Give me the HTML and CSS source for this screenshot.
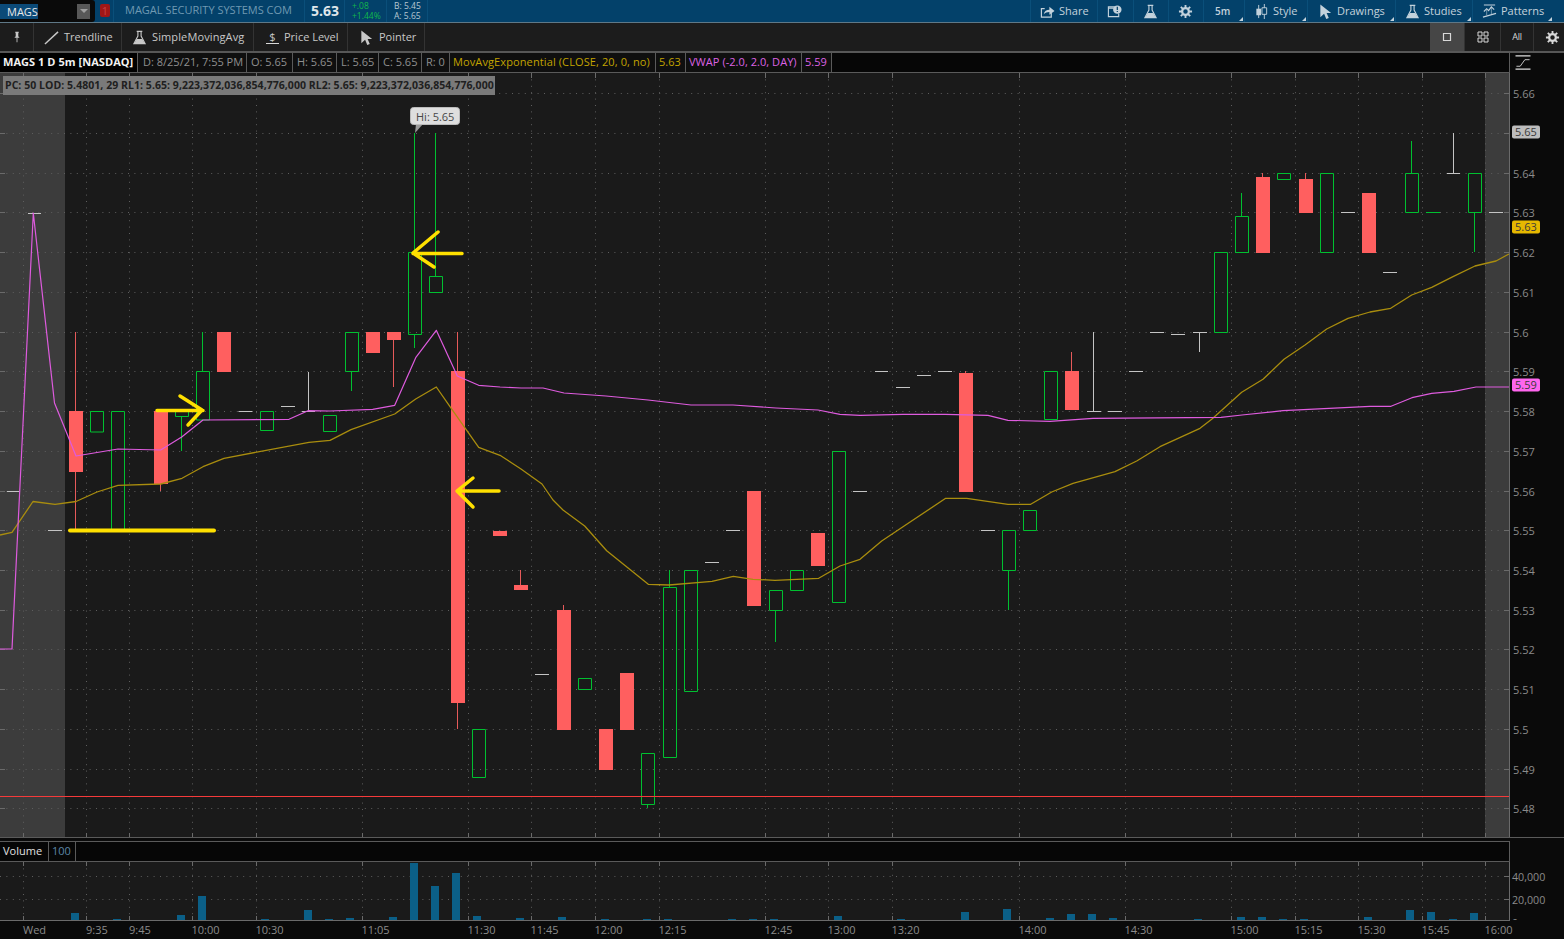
FILE: index.html
```html
<!DOCTYPE html>
<html lang="en">
<head>
<meta charset="utf-8">
<title>MAGS chart</title>
<link rel="stylesheet" href="styles.css">
</head>
<body>
<svg class="defs" width="0" height="0">
  <symbol id="flask" viewBox="0 0 16 16"><path d="M5 1.500h6M6.300 1.500v5L2 14.500h12L9.700 6.500v-5" fill="none" stroke="currentColor" stroke-width="1.200"/><path d="M5 9.500h6l3 5.500H2z" fill="currentColor"/></symbol>
  <symbol id="gear" viewBox="0 0 16 16"><circle cx="8" cy="8" r="3.600" fill="none" stroke="currentColor" stroke-width="2.400"/><path d="M8 1v3M8 12v3M1 8h3M12 8h3M3 3l2.200 2.200M10.800 10.800L13 13M13 3l-2.200 2.200M5.200 10.800L3 13" stroke="currentColor" stroke-width="2"/></symbol>
  <symbol id="cursor" viewBox="0 0 16 16"><path d="M2.500 .5L14 9.500H9.200L11.500 14.800L8.800 16L6.500 10.500L2.500 14z" fill="currentColor"/></symbol>
</svg>

<header class="topbar">
  <div class="symbol">
    <span class="symbol-text">MAGS</span>
    <span class="symbol-btn"></span>
  </div>
  <span class="badge">1</span>
  <span class="company">MAGAL SECURITY SYSTEMS COM</span>
  <span class="last">5.63</span>
  <span class="change"><span>+.08</span><span>+1.44%</span></span>
  <span class="bidask"><span>B: 5.45</span><span>A: 5.65</span></span>
  <nav class="top-actions">
    <span class="act w-share"><svg class="ic" viewBox="0 0 16 16"><path d="M12 9v5H1.500V5H5" fill="none" stroke="currentColor" stroke-width="1.300"/><path d="M4 11c.5-3.500 3-5 6-5V3l5.500 4.500L10 11.500V8.500c-2.500 0-4.500.8-6 2.500z" fill="currentColor"/></svg>Share</span>
    <span class="act w-note"><svg class="ic" viewBox="0 0 16 16"><path d="M1.500 3h9v1.500h-9zM1.500 4.500v9h11V10" fill="none" stroke="currentColor" stroke-width="1.200"/><circle cx="11" cy="6" r="4.500" fill="currentColor"/><path d="M11 3v3.500M11 7.500v1" stroke="#03416a" stroke-width="1.300"/></svg></span>
    <span class="act w-flask"><svg class="ic"><use href="#flask"/></svg></span>
    <span class="act w-gear"><svg class="ic"><use href="#gear"/></svg></span>
    <span class="act w-tf corner"><b class="tf">5m</b></span>
    <span class="act w-style corner"><svg class="ic" viewBox="0 0 16 16"><path d="M5 1v14M11 0v16" stroke="currentColor"/><path d="M2.500 5h5v7h-5z" fill="currentColor"/><path d="M8.500 4h5v7h-5z" fill="#03416a" stroke="currentColor"/></svg>Style</span>
    <span class="act w-draw corner"><svg class="ic"><use href="#cursor"/></svg>Drawings</span>
    <span class="act w-studies corner"><svg class="ic"><use href="#flask"/></svg>Studies</span>
    <span class="act w-patterns corner"><svg class="ic" viewBox="0 0 16 16"><path d="M2 1h12M1 14l14-4M2 8l3-3 2 2 3-4 3 3" fill="none" stroke="currentColor" stroke-width="1.200"/><path d="M5 12V5M10 11V3" stroke="currentColor" stroke-width=".6"/></svg>Patterns</span>
  </nav>
</header>

<section class="toolbar">
  <span class="tool t-pin"><svg class="ic-s" viewBox="0 0 12 14"><path d="M4 1h4v1l-.5.500V6L9 8H3l1.500-2V2.500L4 2zM5.500 8h1v5h-1z" fill="currentColor"/></svg></span>
  <span class="tool t-trend"><svg class="ic" viewBox="0 0 16 16"><path d="M1 15L15 2" stroke="currentColor" stroke-width="1.500"/></svg>Trendline</span>
  <span class="tool t-sma"><svg class="ic"><use href="#flask"/></svg><span class="wide">SimpleMovingAvg</span></span>
  <span class="tool t-price"><span class="dollar">$</span>Price Level</span>
  <span class="tool t-pointer"><svg class="ic"><use href="#cursor"/></svg>Pointer</span>
  <div class="grid-btns">
    <span class="gbtn on"><svg class="ic-s" viewBox="0 0 12 12"><path d="M2.500 2.500h7v7h-7z" fill="none" stroke="currentColor" stroke-width="1.200"/></svg></span>
    <span class="gbtn g2"><svg class="ic-s" viewBox="0 0 12 12"><path d="M1 1h4v4H1zM7 1h4v4H7zM1 7h4v4H1zM7 7h4v4H7z" fill="none" stroke="currentColor"/></svg></span>
    <span class="gbtn g3"><span class="all">All</span></span>
    <span class="gbtn g4"><svg class="ic"><use href="#gear"/></svg></span>
  </div>
</section>

<section class="legend-row">
  <div class="legend">
    <span class="cell title">MAGS 1 D 5m [NASDAQ]</span>
    <span class="cell c-d">D: 8/25/21, 7:55 PM</span>
    <span class="cell c-o">O: 5.65</span>
    <span class="cell c-h">H: 5.65</span>
    <span class="cell c-l">L: 5.65</span>
    <span class="cell c-c">C: 5.65</span>
    <span class="cell c-r">R: 0</span>
    <span class="cell gold c-ema">MovAvgExponential (CLOSE, 20, 0, no)</span>
    <span class="cell gold c-v1">5.63</span>
    <span class="cell pink c-vw">VWAP (-2.0, 2.0, DAY)</span>
    <span class="cell pink c-v2">5.59</span>
  </div>
  <div class="legend-side">
    <svg class="autoscale" viewBox="0 0 16 16"><path d="M0 1h16M0 15h16" stroke="#ddd" stroke-width="1.300"/><path d="M1 12h4l5-7h5" fill="none" stroke="#ccc"/></svg>
  </div>
</section>

<section class="price-pane">
  <div class="study-label">PC: 50 LOD: 5.4801, 29 RL1: 5.65: 9,223,372,036,854,776,000 RL2: 5.65: 9,223,372,036,854,776,000</div>
  <svg class="chart" width="1564" height="764" viewBox="0 73 1564 764">
    <rect class="plot" x="0" y="73" width="1509" height="764"/>
    <rect class="shade" x="0" y="73" width="65" height="764"/>
    <rect class="shade" x="1485" y="73" width="24" height="764"/>

    <path class="grid" d="M0 93.500H1509M0 133.500H1509M0 173.500H1509M0 212.500H1509M0 252.500H1509M0 292.500H1509M0 332.500H1509M0 371.500H1509M0 411.500H1509M0 451.500H1509M0 491.500H1509M0 530.500H1509M0 570.500H1509M0 610.500H1509M0 649.500H1509M0 689.500H1509M0 729.500H1509M0 769.500H1509M0 808.500H1509"/>
    <path class="grid" d="M23.500 73V837M86.500 73V837M129.500 73V837M192.500 73V837M256.500 73V837M362.500 73V837M468.500 73V837M531.500 73V837M595.500 73V837M659.500 73V837M765.500 73V837M828.500 73V837M892.500 73V837M1019.500 73V837M1125.500 73V837M1231.500 73V837M1295.500 73V837M1358.500 73V837M1422.500 73V837M1485.500 73V837"/>
    <path class="tick" d="M23.500 73v5M86.500 73v5M129.500 73v5M192.500 73v5M256.500 73v5M362.500 73v5M468.500 73v5M531.500 73v5M595.500 73v5M659.500 73v5M765.500 73v5M828.500 73v5M892.500 73v5M1019.500 73v5M1125.500 73v5M1231.500 73v5M1295.500 73v5M1358.500 73v5M1422.500 73v5M1485.500 73v5M23.500 833v4M86.500 833v4M129.500 833v4M192.500 833v4M256.500 833v4M362.500 833v4M468.500 833v4M531.500 833v4M595.500 833v4M659.500 833v4M765.500 833v4M828.500 833v4M892.500 833v4M1019.500 833v4M1125.500 833v4M1231.500 833v4M1295.500 833v4M1358.500 833v4M1422.500 833v4M1485.500 833v4"/>
    <path class="tick" d="M1504 93.500h5M1504 133.500h5M1504 173.500h5M1504 212.500h5M1504 252.500h5M1504 292.500h5M1504 332.500h5M1504 371.500h5M1504 411.500h5M1504 451.500h5M1504 491.500h5M1504 530.500h5M1504 570.500h5M1504 610.500h5M1504 649.500h5M1504 689.500h5M1504 729.500h5M1504 769.500h5M1504 808.500h5M0 93.500h5M0 133.500h5M0 173.500h5M0 212.500h5M0 252.500h5M0 292.500h5M0 332.500h5M0 371.500h5M0 411.500h5M0 451.500h5M0 491.500h5M0 530.500h5M0 570.500h5M0 610.500h5M0 649.500h5M0 689.500h5M0 729.500h5M0 769.500h5M0 808.500h5"/>

    <path class="dash" d="M7 491.500h12M28 213.500h13M48 530.500h14M238.500 411.500h14M281 406.500h14M302 411.500h13M535 674.500h14M705 562.500h14M726 530.500h14M853 491.500h14M875 371.500h13M896 387.500h14M917 375.500h14M938 371.500h14M981 530.500h14M1087 411.500h14M1108 411.500h14M1129 371.500h14M1150 332.500h14M1171 334.500h14M1193 332.500h14M1341 212.500h14M1383 272.500h14M1447 173.500h13M1489 212.500h14"/>
    <path class="dash" d="M308.500 372V411M1093.500 332V411M1199.500 332V352M1453.500 133V173"/>
    <path class="wick-dn" d="M75.500 332V530M160.500 484V491M393.500 340V387M457.500 332V729M520.500 570V585M563.500 605V610M1071.500 352V371M1262.500 173V177M1305.500 173V179M965.500 371V373"/>
    <path class="bar-dn" d="M69 411h14v61H69zM154 411h14v73h-14zM217 332h14v40h-14zM366 332h14v21h-14zM387 332h14v8h-14zM451 371h14v332h-14zM493 531h14v5h-14zM514 585h14v5h-14zM557 610h14v120h-14zM599 729h14v41h-14zM620 673h14v57h-14zM747 491h14v115h-14zM811 533h14v33h-14zM959 373h14v119h-14zM1065 371h14v39h-14zM1256 177h14v76h-14zM1299 179h14v34h-14zM1362 193h14v60h-14z"/>
    <path class="wick-up" d="M181.500 416V451M202.500 332V371M351.500 371V391M414.500 133V252M414.500 334V348M435.500 133V276M647.500 804V808M669.500 570V587M775.500 610V642M1008.500 570V610M1241.500 193V216M1411.500 141V173M1474.500 212V252M1426 212.500h14"/>
    <path class="bar-up" d="M90.500 411.500h13v20.500h-13zM111.500 411.500h13V530h-13zM175.500 411.500h13v5h-13zM196.500 371.500h13V420h-13zM260.500 411.500h13v19h-13zM323.500 415.500h13v16h-13zM345.500 332.500h13v39h-13zM408.500 252.500h13v82h-13zM429.500 276.500h13v16h-13zM472.500 729.500h13v48h-13zM578.500 678.500h13v11h-13zM641.500 753.500h13v51h-13zM663.500 587.500h13v170h-13zM684.500 570.500h13v121h-13zM769.500 590.500h13v20h-13zM790.500 570.500h13v20h-13zM832.500 451.500h13v151h-13zM1002.500 530.500h13v40h-13zM1023.500 510.500h13v20h-13zM1044.500 371.500h13v48h-13zM1214.500 252.500h13v80h-13zM1235.500 216.500h13v36h-13zM1277.500 173.500h13v6h-13zM1320.500 173.500h13v79h-13zM1405.500 173.500h13v39h-13zM1468.500 173.500h13v39h-13z"/>

    <path class="redline" d="M0 796.500H1509"/>
    <polyline class="ema" points="0,535 12,532.300 33,501.500 55,504.300 76,501.500 97,492 118,485.300 160.700,484 182,478.300 203,466.700 224,458.300 309,442.300 330,440.300 351,429.700 394.700,414 415.700,399 436.300,387 450,406.700 478.700,447.300 500,455.300 521,469 542,484 553,500 563,510 584.700,526 606.700,550.700 648.300,584.300 669,585 712,581.300 733.300,576.300 753,579.300 775,580.300 818.700,578.300 840,566 860,559.300 881.700,541 903,526.700 945.700,498.300 966.700,498.300 1008,504.300 1030.700,504.300 1051.700,492 1073,483.300 1115,471.700 1136.700,461 1160,446.700 1200,428.300 1212,419 1241.700,392.300 1263,379.300 1284,359.300 1305,345 1326.700,329 1348,318.300 1370,312 1390.700,308.300 1411.700,295 1431.700,287.300 1453,276.700 1475,266 1496,261 1509,254"/>
    <polyline class="vwap" points="0,649 12,649 33.300,213 54.500,403 76,456 118,449 160.700,450 181.700,437 203,420 289,419.300 308,410.700 330,411 372.700,409.300 394.700,405.300 415.700,357.700 436.300,330.300 457.300,376 478.700,385.300 500,387 521,388 543,388 564,393 606,396 648,400 691,405 733,405 776,408 818,410 840,414.300 860,415.300 903,414.300 945.300,414.300 988,415.300 1008,420.300 1050,421.300 1093,418.300 1221,417.300 1242,415 1283,410.700 1370,406.300 1391,406.300 1412,397.700 1431.700,393.300 1454,391.300 1476,387 1509,387"/>

    <path class="marker thick" d="M70 530.500H214"/>
    <path class="marker" d="M157 410.500H203M180 396L202 410L188 425"/>
    <path class="marker" d="M462 253.500H413M438 232L413 253L434 267"/>
    <path class="marker" d="M499 491H457M473 478L457 491L473 507"/>

    <path class="tip-tail" d="M416 124L415 133L423 124z"/>
    <rect class="tip" x="410.500" y="107.500" width="49" height="17" rx="3"/>
    <text class="tip-text" x="416" y="120.500">Hi: 5.65</text>

    <rect class="tag tag-hi" x="1512" y="125.500" width="28" height="13" rx="2"/>
    <rect class="tag tag-last" x="1512" y="220.500" width="28" height="13" rx="2"/>
    <rect class="tag tag-vwap" x="1512" y="378.500" width="28" height="13" rx="2"/>
    <path class="edge" d="M1509.500 73V837"/>
    <g class="axis">
      <text x="1513" y="97.500">5.66</text>
      <text class="tag-text" x="1515" y="136">5.65</text>
      <text x="1513" y="178">5.64</text>
      <text x="1513" y="217">5.63</text>
      <text class="tag-text" x="1515" y="231">5.63</text>
      <text x="1513" y="257">5.62</text>
      <text x="1513" y="297">5.61</text>
      <text x="1513" y="337">5.6</text>
      <text x="1513" y="376">5.59</text>
      <text class="tag-text" x="1515" y="389">5.59</text>
      <text x="1513" y="416">5.58</text>
      <text x="1513" y="456">5.57</text>
      <text x="1513" y="496">5.56</text>
      <text x="1513" y="535">5.55</text>
      <text x="1513" y="575">5.54</text>
      <text x="1513" y="615">5.53</text>
      <text x="1513" y="654">5.52</text>
      <text x="1513" y="694">5.51</text>
      <text x="1513" y="734">5.5</text>
      <text x="1513" y="774">5.49</text>
      <text x="1513" y="813">5.48</text>
    </g>
  </svg>
</section>

<section class="vol-legend">
  <div class="legend vol-inner">
    <span class="cell vol-name">Volume</span>
    <span class="cell vol-num">100</span>
  </div>
</section>

<section class="vol-pane">
  <svg class="chart" width="1564" height="77" viewBox="0 862 1564 77">
    <clipPath id="volclip"><rect x="1510" y="862" width="54" height="58"/></clipPath>
    <rect class="plot" x="0" y="862" width="1509" height="58"/>
    <path class="grid" d="M0 876.500H1509M0 899.500H1509"/>
    <path class="grid" d="M23.500 862V920M86.500 862V920M129.500 862V920M192.500 862V920M256.500 862V920M362.500 862V920M468.500 862V920M531.500 862V920M595.500 862V920M659.500 862V920M765.500 862V920M828.500 862V920M892.500 862V920M1019.500 862V920M1125.500 862V920M1231.500 862V920M1295.500 862V920M1358.500 862V920M1422.500 862V920M1485.500 862V920"/>
    <path class="tick" d="M23.500 862v4M86.500 862v4M129.500 862v4M192.500 862v4M256.500 862v4M362.500 862v4M468.500 862v4M531.500 862v4M595.500 862v4M659.500 862v4M765.500 862v4M828.500 862v4M892.500 862v4M1019.500 862v4M1125.500 862v4M1231.500 862v4M1295.500 862v4M1358.500 862v4M1422.500 862v4M1485.500 862v4M23.500 916v4M86.500 916v4M129.500 916v4M192.500 916v4M256.500 916v4M362.500 916v4M468.500 916v4M531.500 916v4M595.500 916v4M659.500 916v4M765.500 916v4M828.500 916v4M892.500 916v4M1019.500 916v4M1125.500 916v4M1231.500 916v4M1295.500 916v4M1358.500 916v4M1422.500 916v4M1485.500 916v4M1504 876.500h5M1504 899.500h5"/>
    <path class="vol" d="M71 913h8v7h-8zM113 919h8v1h-8zM177 915h8v5h-8zM198 896h8v24h-8zM261 919h8v1h-8zM304 910h8v10h-8zM325 919h8v1h-8zM346 918h8v2h-8zM389 917h8v3h-8zM410 863h8v57h-8zM431 886h8v34h-8zM452 873h8v47h-8zM473 916h8v4h-8zM516 918h8v2h-8zM558 917h8v3h-8zM601 919h8v1h-8zM643 919h8v1h-8zM664 919h8v1h-8zM728 919h8v1h-8zM749 919h8v1h-8zM770 919h8v1h-8zM834 916h8v4h-8zM897 919h8v1h-8zM961 912h8v8h-8zM1003 909h8v11h-8zM1046 918h8v2h-8zM1067 914h8v6h-8zM1088 914h8v6h-8zM1109 918h8v2h-8zM1194 919h8v1h-8zM1237 917h8v3h-8zM1258 917h8v3h-8zM1279 919h8v1h-8zM1300 919h8v1h-8zM1364 917h8v3h-8zM1406 910h8v10h-8zM1427 912h8v8h-8zM1449 919h8v1h-8zM1470 913h8v7h-8z"/>
    <path class="edge" d="M0 920.500H1509M1509.500 862V921"/>
    <g class="axis">
      <text class="num" x="1512" y="881">40,000</text>
      <text class="num" x="1512" y="904">20,000</text>
      <text class="num" x="1512" y="927" clip-path="url(#volclip)">0</text>
      <text x="23" y="934">Wed</text>
      <text x="86" y="934">9:35</text>
      <text x="129" y="934">9:45</text>
      <text x="191.500" y="934">10:00</text>
      <text x="255.500" y="934">10:30</text>
      <text x="361.500" y="934">11:05</text>
      <text x="467.500" y="934">11:30</text>
      <text x="530.500" y="934">11:45</text>
      <text x="594.500" y="934">12:00</text>
      <text x="658.500" y="934">12:15</text>
      <text x="764.500" y="934">12:45</text>
      <text x="827.500" y="934">13:00</text>
      <text x="891.500" y="934">13:20</text>
      <text x="1018.500" y="934">14:00</text>
      <text x="1124.500" y="934">14:30</text>
      <text x="1230.500" y="934">15:00</text>
      <text x="1294.500" y="934">15:15</text>
      <text x="1357.500" y="934">15:30</text>
      <text x="1421.500" y="934">15:45</text>
      <text x="1484.500" y="934">16:00</text>
    </g>
  </svg>
</section>
</body>
</html>
```
FILE: styles.css
```css
* { box-sizing: border-box; }
html, body { margin: 0; padding: 0; }
body {
  width: 1564px;
  height: 939px;
  overflow: hidden;
  background: #0a0a0a;
  color: #c8c8c8;
  font-family: "Open Sans", "Noto Sans", sans-serif;
  font-size: 11px;
  line-height: 14px;
}
.defs { position: absolute; }

/* top bar */
.topbar {
  display: flex;
  align-items: center;
  height: 23px;
  background: #03416a;
  border-bottom: 1px solid #5f7887;
}
.symbol {
  display: flex;
  align-items: center;
  width: 95px;
  height: 22px;
  padding: 0 5px 0 0;
  background: #0a0a0a;
  border-radius: 0 3px 3px 0;
}
.symbol-text {
  width: 38px;
  padding-left: 7px;
  background: #0b4a78;
  color: #e8e8e8;
  line-height: 15px;
}
.symbol-btn {
  position: relative;
  width: 14px;
  height: 15px;
  margin-left: 39px;
  background: #585858;
}
.symbol-btn::after {
  content: "";
  position: absolute;
  left: 3px;
  top: 5px;
  border: 4px solid transparent;
  border-top: 4px solid #a0a0a0;
}
.badge {
  width: 10px;
  height: 13px;
  margin: 0 3px 2px 5px;
  background: #a01616;
  color: #c84040;
  border-radius: 2px;
  line-height: 13px;
  text-align: center;
}
.company {
  width: 192px;
  height: 22px;
  padding-left: 11px;
  border-left: 1px solid #0a4f7a;
  border-right: 1px solid #0a4f7a;
  color: #6f99b2;
  line-height: 20px;
  white-space: nowrap;
}
.last {
  width: 40px;
  padding-left: 6px;
  border-right: 1px solid #0a4f7a;
  height: 22px;
  color: #dfe6ea;
  font-size: 14px;
  font-weight: 700;
  line-height: 22px;
}
.change, .bidask {
  display: flex;
  flex-direction: column;
  height: 22px;
  font-size: 8.500px;
  line-height: 9.500px;
  padding-top: 1px;
  border-right: 1px solid #0a4f7a;
}
.change { width: 42px; padding-left: 7px; color: #12b84a; }
.bidask { width: 41px; padding-left: 7px; color: #b8c8d2; }
.top-actions {
  display: flex;
  height: 22px;
  margin-left: auto;
  color: #c3d2dc;
}
.act {
  position: relative;
  display: flex;
  align-items: center;
  gap: 4px;
  padding-left: 9px;
  border-left: 1px solid #0a4f7a;
}
.w-share { width: 67px; }
.w-note { width: 36px; }
.w-flask { width: 35px; }
.w-gear { width: 35px; }
.w-tf { width: 41px; padding-left: 11px; }
.w-style { width: 63px; }
.w-draw { width: 88px; padding-left: 10px; }
.w-studies { width: 77px; }
.w-patterns { width: 92px; }
.tf { font-weight: 600; font-size: 10px; }
.corner::after {
  content: "";
  position: absolute;
  bottom: 1px;
  right: 1px;
  border: 2px solid #c3d2dc;
  border-top-color: transparent;
  border-left-color: transparent;
}
.w-patterns.corner::after { right: 12px; }
.ic { width: 15px; height: 15px; flex: none; }
.ic-s { width: 12px; height: 12px; flex: none; }

/* tool bar */
.toolbar {
  display: flex;
  align-items: center;
  height: 30px;
  background: #1c1c1c;
  border-bottom: 2px solid #575757;
}
.tool {
  display: flex;
  align-items: center;
  gap: 5px;
  height: 28px;
  border-right: 1px solid #333;
  color: #c8c8c8;
}
.t-pin { width: 34px; justify-content: center; }
.t-trend { width: 88px; padding-left: 10px; }
.t-sma { width: 132px; padding-left: 10px; }
.t-price { width: 94px; padding-left: 12px; }
.t-pointer { width: 77px; padding-left: 11px; }
.wide { letter-spacing: .12px; }
.dollar {
  width: 13px;
  border-bottom: 1px solid #d8d8d8;
  text-align: center;
  line-height: 13px;
}
.grid-btns { display: flex; margin-left: auto; height: 28px; }
.gbtn {
  display: flex;
  align-items: center;
  justify-content: center;
  border-left: 1px solid #333;
  color: #d8d8d8;
}
.gbtn.on { width: 34px; background: #464646; border-left: 0; }
.g2 { width: 36px; }
.g3 { width: 33px; }
.g4 { width: 31px; padding-left: 6px; }
.all { font-size: 9px; letter-spacing: -.3px; }

/* legend */
.legend-row { display: flex; height: 20px; }
.legend {
  display: flex;
  flex: 1;
  background: #060606;
  border-bottom: 1px solid #5a5a5a;
  border-right: 1px solid #5a5a5a;
}
.legend-side {
  display: flex;
  width: 54px;
  padding: 2px 0 0 5px;
  background: #0a0a0a;
}
.autoscale { width: 16px; height: 15px; }
.cell {
  height: 19px;
  padding-left: 3px;
  border-right: 1px solid #5a5a5a;
  color: #909090;
  line-height: 18px;
  white-space: nowrap;
  background: #0f0f0f;
}
.title { width: 138px; background: #000; color: #f2f2f2; font-weight: 700; letter-spacing: .05px; }
.c-d { width: 109px; padding-left: 5px; }
.c-o { width: 46px; padding-left: 4px; }
.c-h { width: 44px; padding-left: 4px; }
.c-l { width: 42px; padding-left: 4px; }
.c-c { width: 43px; padding-left: 4px; }
.c-r { width: 28px; padding-left: 4px; }
.c-ema { width: 206px; letter-spacing: .11px; }
.c-v1 { width: 30px; }
.c-vw { width: 116px; letter-spacing: .05px; }
.c-v2 { width: 30px; }
.gold { color: #c2a300; }
.pink { color: #dd62e4; }

/* chart panes */
.price-pane { position: relative; height: 764px; }
.chart { display: block; }
.study-label {
  position: absolute;
  left: 3px;
  top: 3px;
  width: 492px;
  height: 19px;
  padding-left: 2px;
  background: #7a7a7a;
  color: #202020;
  font-size: 10.500px;
  font-weight: 700;
  letter-spacing: .045px;
  line-height: 18px;
  white-space: nowrap;
}
.plot { fill: #1a1a1a; }
.shade { fill: #3c3c3c; }
.grid { fill: none; stroke: #5e5e5e; stroke-width: 1; stroke-dasharray: 1 5.400; }
.tick { fill: none; stroke: #6a6a6a; stroke-width: 1; }
.edge { fill: none; stroke: #6a6a6a; stroke-width: 1; }
.dash { fill: none; stroke: #c4c4c4; stroke-width: 1; }
.wick-dn { fill: none; stroke: #e65a5a; stroke-width: 1; }
.bar-dn { fill: #ff5f5f; }
.wick-up { fill: none; stroke: #00c030; stroke-width: 1; }
.bar-up { fill: none; stroke: #00c030; stroke-width: 1; }
.redline { fill: none; stroke: #f53a3a; stroke-width: 1; }
.ema { fill: none; stroke: #a98d0e; stroke-width: 1.300; stroke-linejoin: round; }
.vwap { fill: none; stroke: #de5bde; stroke-width: 1.200; stroke-linejoin: round; }
.marker { fill: none; stroke: #ffe000; stroke-width: 3.500; stroke-linecap: round; stroke-linejoin: round; }
.marker.thick { stroke-width: 4; }
.tip { fill: #dedede; stroke: #bbb; stroke-width: 1; }
.tip-tail { fill: #9a9a9a; }
.tip-text { fill: #474747; font-size: 11px; }
.tag-hi { fill: #bdbdbd; }
.tag-last { fill: #e6b800; }
.tag-vwap { fill: #ff66ee; }
.axis text { fill: #8b8b8b; font-size: 11px; }
.axis .tag-text { fill: #3a3a3a; }
.axis .num { font-size: 10.700px; }

/* volume */
.vol-legend {
  height: 25px;
  padding-top: 4px;
  border-top: 1px solid #5a5a5a;
  position: relative;
}
.vol-legend::before {
  content: "";
  position: absolute;
  left: 0;
  right: 54px;
  top: 3px;
  border-top: 1px solid #5a5a5a;
}
.vol-inner { height: 20px; width: 1510px; flex: none; }
.vol-name { width: 49px; color: #e0e0e0; background: #060606; line-height: 17px; }
.vol-num { width: 27px; color: #5b86a6; background: #060606; padding-left: 3px; line-height: 17px; }
.vol-pane { height: 77px; }
.vol { fill: #0b5f87; }
```
